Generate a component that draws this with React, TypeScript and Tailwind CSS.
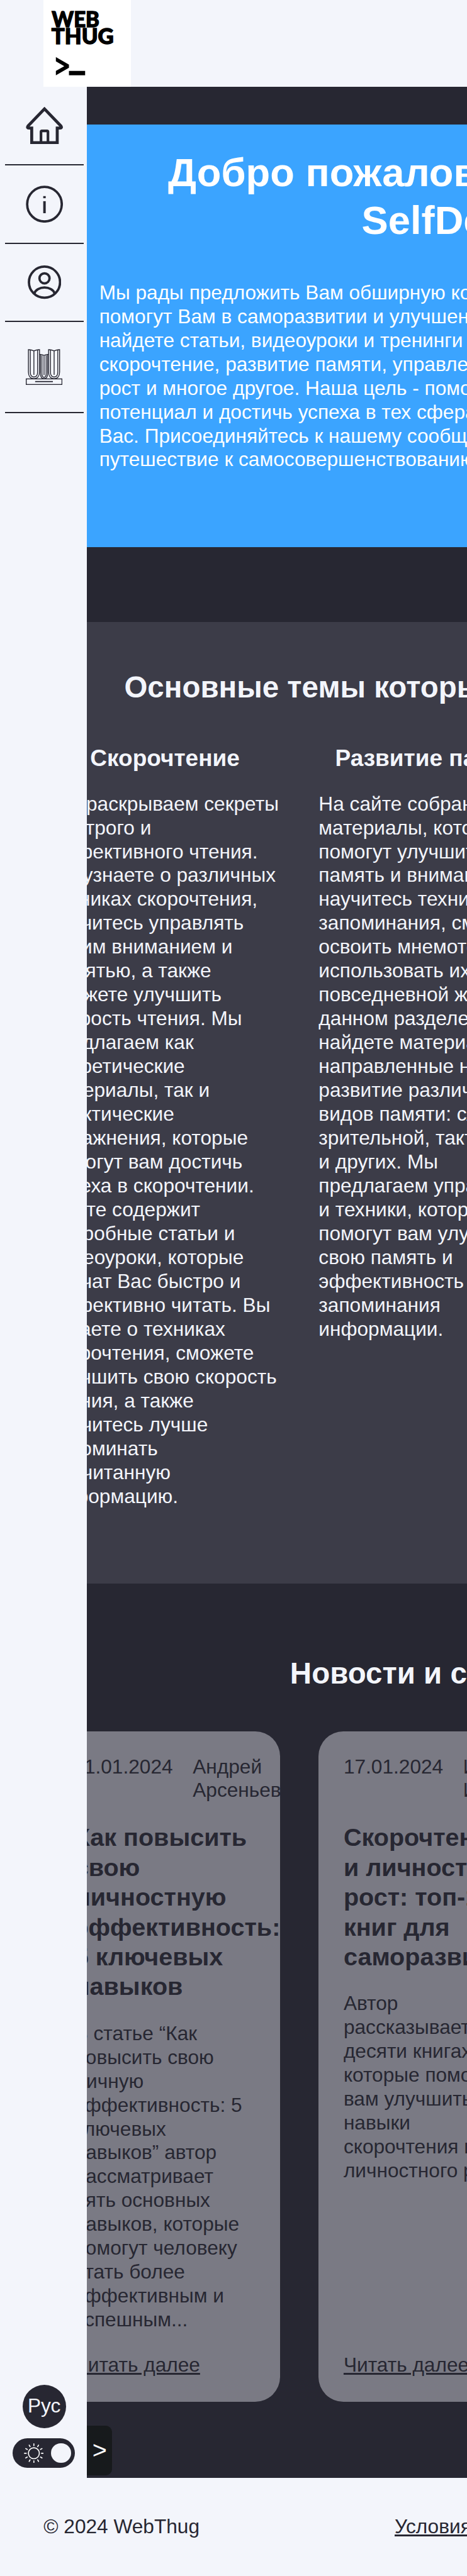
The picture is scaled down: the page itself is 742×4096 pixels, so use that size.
import type { ReactNode } from "react";

function Logo() {
  return (
    <svg viewBox="0 0 140 140" className="h-[70px] w-[70px] bg-white">
      <g
        fill="#000"
        stroke="#000"
        strokeWidth="1.4"
        fontFamily="Lato, 'Liberation Sans', sans-serif"
        fontWeight="900"
        fontSize="34"
      >
        <text x="13.5" y="43.5" textLength="76.5" lengthAdjust="spacingAndGlyphs">WEB</text>
        <text x="13" y="71.2" textLength="100" lengthAdjust="spacingAndGlyphs">THUG</text>
      </g>
      <path d="M20 91.7 L41 103.8 V109 L20 121 V114 L33.5 106.4 L20 98.7 Z" />
      <rect x="41" y="114" width="26" height="7" />
    </svg>
  );
}

function HomeIcon() {
  return (
    <svg viewBox="0 0 60 60" className="h-[30px] w-[30px]" fill="none" stroke="#272732" strokeWidth="4.8">
      <path d="M30 3.2 L3.6 30.6 Q1.4 34 5 34 H9.5 V57.4 H50.5 V34 H55 Q58.6 34 56.4 30.6 Z" />
      <path d="M24.4 57 V40 Q24.4 38.500 25.9 38.500 H34.1 Q35.6 38.500 35.6 40 V57" strokeWidth="4.2" />
    </svg>
  );
}

function InfoIcon() {
  return (
    <svg viewBox="0 0 60 60" className="h-[30px] w-[30px]">
      <circle cx="30" cy="30" r="27.8" fill="none" stroke="#272732" strokeWidth="3.8" />
      <rect x="28" y="17" width="4" height="3.4" fill="#272732" />
      <rect x="28" y="25.2" width="4" height="19.300" fill="#272732" />
    </svg>
  );
}

function UserIcon() {
  return (
    <svg viewBox="0 0 54 54" className="h-[27px] w-[27px]" fill="none" stroke="#272732" strokeWidth="3.8">
      <circle cx="27" cy="27" r="25" />
      <circle cx="27" cy="20.8" r="8.1" />
      <path d="M10.4 45.300 C15 32.300 39 32.300 43.6 45.300" />
    </svg>
  );
}

function BooksIcon() {
  return (
    <svg viewBox="0 0 59 58" className="h-[29px] w-[29.5px]" fill="none" stroke="#272732" strokeWidth="1.4">
      <path d="M4.2 1 V37 C4.2 43 7 47.8 13 47.8 C19 47.8 22 43 22 37 V1 Q17.5 1 13 2.8 Q8.700 1 4.200 1 Z" />
      <path d="M7.2 1.500 V37 C7.200 42 9 45 13 45 C17 45 19 42 19 37 V1.500 M13 3 V41.500" />
      <path d="M22 8.500 Q26 8.500 29.300 10.200 Q32.500 8.500 36.600 8.500 M23.600 9 V39 C23.600 44 25.500 47.800 29.300 47.800 C33 47.800 35 44 35 39 V9" />
      <path d="M25.900 10 V39 C25.900 43 27 45.500 29.300 45.500 C31.600 45.500 32.700 43 32.700 39 V10 M29.300 10.500 V42" />
      <path d="M36.600 1 V37 C36.600 43 39.500 47.800 45.500 47.800 C51.500 47.800 54.300 43 54.300 37 V1 Q50 1 45.500 2.800 Q41 1 36.600 1 Z" />
      <path d="M39.600 1.500 V37 C39.600 42 41.500 45 45.500 45 C49.500 45 51.400 42 51.400 37 V1.500 M45.500 3 V41.500" />
      <rect x="0.700" y="48" width="57.400" height="9" />
      <path d="M15 52.300 H43.500" strokeWidth="1.800" />
    </svg>
  );
}

const rays = [0, 30, 60, 90, 120, 150, 180, 210, 240, 270, 300, 330];

function SunIcon() {
  return (
    <svg viewBox="0 0 32 32" className="h-4 w-4" fill="none" stroke="#fff" strokeWidth="1.7" strokeLinecap="round">
      <circle cx="16" cy="16" r="8.800" />
      {rays.map((a) => (
        <path key={a} d="M16 0.900 V3.800" transform={`rotate(${a} 16 16)`} />
      ))}
    </svg>
  );
}

function NavItem({ tall, children }: { tall?: boolean; children: ReactNode }) {
  return (
    <a
      className={
        tall
          ? "flex h-[73px] w-[63px] items-center justify-center border-b-[1.1px] border-[#272732]"
          : "flex h-[63px] w-[63px] items-center justify-center border-b-[1.1px] border-[#272732]"
      }
    >
      {children}
    </a>
  );
}

function Lines({ items }: { items: string[] }) {
  return (
    <>
      {items.map((t, i) => (
        <span key={i} className="block whitespace-nowrap">
          {t}
        </span>
      ))}
    </>
  );
}

const intro = [
  "Мы рады предложить Вам обширную коллекцию",
  "помогут Вам в саморазвитии и улучшении",
  "найдете статьи, видеоуроки и тренинги по",
  "скорочтение, развитие памяти, управление",
  "рост и многое другое. Наша цель - помочь",
  "потенциал и достичь успеха в тех сферах",
  "Вас. Присоединяйтесь к нашему сообществу",
  "путешествие к самосовершенствованию",
];

const topics = [
  {
    title: "Скорочтение",
    lines: [
      "Мы раскрываем секреты", "быстрого и", "эффективного чтения.", "Вы узнаете о различных",
      "техниках скорочтения,", "научитесь управлять", "своим вниманием и", "памятью, а также",
      "сможете улучшить", "скорость чтения. Мы", "предлагаем как", "теоретические",
      "материалы, так и", "практические", "упражнения, которые", "помогут вам достичь",
      "успеха в скорочтении.", "Сайте содержит", "подробные статьи и", "видеоуроки, которые",
      "научат Вас быстро и", "эффективно читать. Вы", "узнаете о техниках", "скорочтения, сможете",
      "улучшить свою скорость", "чтения, а также", "научитесь лучше", "запоминать",
      "прочитанную", "информацию.",
    ],
  },
  {
    title: "Развитие памяти",
    lines: [
      "На сайте собраны", "материалы, которые", "помогут улучшить", "память и внимание. Вы",
      "научитесь техникам", "запоминания, сможете", "освоить мнемотехники и", "использовать их в",
      "повседневной жизни. В", "данном разделе вы", "найдете материалы,", "направленные на",
      "развитие различных", "видов памяти: слуховой,", "зрительной, тактильной", "и других. Мы",
      "предлагаем упражнения", "и техники, которые", "помогут вам улучшить", "свою память и",
      "эффективность", "запоминания", "информации.",
    ],
  },
];

const news = [
  {
    date: "11.01.2024",
    author: ["Андрей", "Арсеньев"],
    title: ["Как повысить", "свою", "личностную", "эффективность:", "5 ключевых", "навыков"],
    text: [
      "В статье “Как", "повысить свою", "личную", "эффективность: 5", "ключевых", "навыков” автор",
      "рассматривает", "пять основных", "навыков, которые", "помогут человеку", "стать более",
      "эффективным и", "успешным...",
    ],
  },
  {
    date: "17.01.2024",
    author: ["Ирина", "Иванова"],
    title: ["Скорочтение", "и личностный", "рост: топ-10", "книг для", "саморазвития"],
    text: [
      "Автор", "рассказывает о", "десяти книгах,", "которые помогут", "вам улучшить", "навыки",
      "скорочтения и", "личностного роста.",
    ],
  },
];

export default function App() {
  return (
    <div className="w-full overflow-hidden bg-[#f3f5fb]">
      <div className="flex h-[2071px] w-full flex-col overflow-hidden bg-[#f3f5fb] font-['Liberation_Sans',Arial,sans-serif] text-base leading-[19.2px] text-[#272732] [zoom:1.978]">
        <header className="flex h-[70px] shrink-0 pl-[35px]">
          <Logo />
        </header>

        <div className="flex h-[1922px] shrink-0">
          <aside className="flex w-[70px] shrink-0 flex-col pb-2 pl-1">
            <NavItem><HomeIcon /></NavItem>
            <NavItem><InfoIcon /></NavItem>
            <NavItem><UserIcon /></NavItem>
            <NavItem tall><BooksIcon /></NavItem>
            <div className="mt-auto flex flex-col gap-2">
              <button className="ml-[14px] flex h-[35px] w-[35px] items-center justify-center rounded-full bg-[#272732] text-[#f3f5fb]">
                Рус
              </button>
              <div className="ml-1.5 flex h-6 w-[50px] items-center justify-between rounded-full bg-[#272732] pr-[3px] pl-[9px]">
                <SunIcon />
                <span className="h-4 w-4 rounded-full bg-[#f3f5fb]" />
              </div>
            </div>
          </aside>

          <main className="flex min-w-0 flex-1 flex-col overflow-hidden bg-[#272732]">
            <section className="mt-[30px] h-[340px] shrink-0 bg-[#3ba4ff] pt-5 text-white">
              <h1 className="text-[32px] leading-[38.4px] font-bold whitespace-nowrap">
                <span className="block pl-[65px]">Добро пожаловать</span>
                <span className="block pl-[220.5px]">SelfDevelopment</span>
              </h1>
              <p className="mt-[29px] pl-[9.700px]">
                <Lines items={intro} />
              </p>
            </section>

            <section className="mt-[60px] h-[773px] shrink-0 bg-[#3c3c48] pt-[38.5px] text-[#f3f5fb]">
              <h2 className="pl-[29.800px] text-2xl leading-[28.8px] font-bold whitespace-nowrap">
                Основные темы которые
              </h2>
              <div className="mt-[31px] -ml-[30px] flex gap-[31px]">
                {topics.map((t) => (
                  <article key={t.title} className="w-[185px] shrink-0">
                    <h3 className="text-center text-[18.72px] leading-[22.5px] font-bold whitespace-nowrap">
                      {t.title}
                    </h3>
                    <p className="mt-4">
                      <Lines items={t.lines} />
                    </p>
                  </article>
                ))}
              </div>
            </section>

            <section className="flex h-[719px] shrink-0 flex-col pt-[58px]">
              <h2 className="pl-[163px] text-2xl leading-[28.8px] font-bold whitespace-nowrap text-[#f3f5fb]">
                Новости и статьи
              </h2>
              <div className="mt-[32px] -ml-[30px] flex h-[539px] gap-[31px]">
                {news.map((n) => (
                  <article
                    key={n.date}
                    className="flex w-[185px] shrink-0 flex-col overflow-hidden rounded-[20px] bg-[#7a7a84] px-5 pt-[19px] pb-5"
                  >
                    <div className="flex gap-4">
                      <span>{n.date}</span>
                      <span><Lines items={n.author} /></span>
                    </div>
                    <h3 className="mt-4 text-xl leading-6 font-bold">
                      <Lines items={n.title} />
                    </h3>
                    <p className="mt-4">
                      <Lines items={n.text} />
                    </p>
                    <a className="mt-auto underline">Читать далее</a>
                  </article>
                ))}
              </div>
              <button className="mt-[19px] flex h-10 w-5 items-center justify-center rounded-r-[5px] bg-[#171a1c] text-xl leading-6 text-white">
                &gt;
              </button>
            </section>
          </main>
        </div>

        <footer className="flex h-[79px] shrink-0 items-center pl-[35px] whitespace-nowrap">
          <span className="w-[282px] shrink-0">© 2024 WebThug</span>
          <a className="underline">Условия использования</a>
        </footer>
      </div>
    </div>
  );
}
